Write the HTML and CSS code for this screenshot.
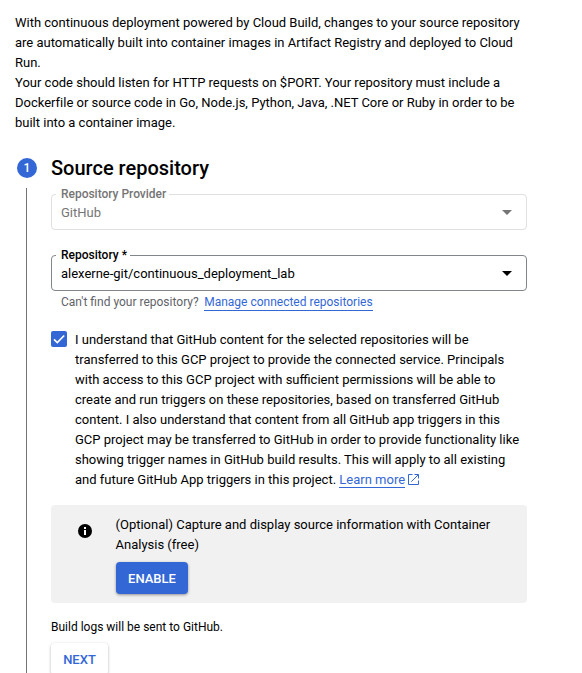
FILE: index.html
```
<!DOCTYPE html>
<html lang="en">
<head>
<meta charset="utf-8">
<title>Set up with Cloud Build</title>
<link rel="stylesheet" href="styles.css">
</head>
<body>
<main class="page">
  <section class="intro">
    <p>With continuous deployment powered by Cloud Build, changes to your source repository<br>are automatically built into container images in Artifact Registry and deployed to Cloud<br>Run.</p>
    <p>Your code should listen for HTTP requests on $PORT. Your repository must include a<br>Dockerfile or source code in Go, Node.js, Python, Java, .NET Core or Ruby in order to be<br>built into a container image.</p>
  </section>
  <section class="step">
    <div class="rail">
      <span class="number">1</span>
      <span class="line"></span>
    </div>
    <div class="content">
      <h2>Source repository</h2>
      <div class="field disabled">
        <span class="label">Repository Provider</span>
        <span class="value">GitHub</span>
        <svg class="arrow" width="10" height="5" viewBox="0 0 10 5"><path d="M0 0h10L5 5z"/></svg>
      </div>
      <div class="field active">
        <span class="label">Repository *</span>
        <span class="value">alexerne-git/continuous_deployment_lab</span>
        <svg class="arrow" width="10" height="5" viewBox="0 0 10 5"><path d="M0 0h10L5 5z"/></svg>
      </div>
      <p class="hint"><span>Can't find your repository?</span><a class="link">Manage connected repositories</a></p>
      <div class="consent">
        <span class="checkbox"><svg width="16" height="16" viewBox="0 0 16 16"><path d="M3 8.4l3.3 3.2L13.2 4.5" fill="none" stroke="#fff" stroke-width="1.7"/></svg></span>
        <p>I understand that GitHub content for the selected repositories will be<br>transferred to this GCP project to provide the connected service. Principals<br>with access to this GCP project with sufficient permissions will be able to<br>create and run triggers on these repositories, based on transferred GitHub<br>content. I also understand that content from all GitHub app triggers in this<br>GCP project may be transferred to GitHub in order to provide functionality like<br>showing trigger names in GitHub build results. This will apply to all existing<br>and future GitHub App triggers in this project. <a class="link">Learn more</a><svg class="external" width="11" height="11" viewBox="0 0 11 11" fill="none" stroke="#3367d6" stroke-width="1"><path d="M4.5.5h-4v10h10v-4M6.5.5h4v4M10.3.7L3.3 7.7"/></svg></p>
      </div>
      <div class="panel">
        <svg class="info" width="14" height="14" viewBox="0 0 14 14"><circle cx="7" cy="7" r="7"/><path d="M6 3h2v2H6zM6 6h2v5H6z" fill="#fff"/></svg>
        <div>
          <p>(Optional) Capture and display source information with Container<br>Analysis (free)</p>
          <button class="button primary">ENABLE</button>
        </div>
      </div>
      <p class="logs">Build logs will be sent to GitHub.</p>
      <button class="button plain">NEXT</button>
    </div>
  </section>
</main>
</body>
</html>
```
FILE: styles.css
```
* { box-sizing: border-box; }
html, body { margin: 0; height: 100%; overflow: hidden; }
body {
  background: #fff;
  color: #000;
  font: 400 13px/20px Roboto, sans-serif;
}
p, h2 { margin: 0; font-weight: 400; white-space: nowrap; }
.page { padding: 13px 55px 0 15px; height: 673px; overflow: hidden; }
.intro { height: 120px; letter-spacing: -.005px; }
.step { display: flex; margin-top: 25px; height: 540px; }
.rail { flex: 0 0 36px; display: flex; flex-direction: column; }
.number {
  width: 20px; height: 20px; margin: 0 0 10px 2px;
  border-radius: 50%;
  background: #3367d6; color: #fff;
  font-size: 12px; font-weight: 500; text-align: center;
}
.line { width: 1px; flex: 1; margin-left: 11px; background: #757575; }
.content { flex: 0 0 476px; }
h2 { font-size: 20px; font-weight: 500; line-height: 24px; margin-top: -2px; }
.field {
  position: relative;
  display: flex; align-items: center; justify-content: space-between;
  height: 36px; padding: 1px 14px 0 9px;
  border: 1px solid #80868b; border-radius: 4px;
}
.field .arrow { margin-bottom: 1px; }
.disabled { margin-top: 14px; border-color: #e0e0e0; color: #757575; fill: #757575; }
.active { margin-top: 25px; }
.active .value { letter-spacing: -.01px; }
.label {
  position: absolute; left: 4px; top: -9px;
  padding: 0 3px 0 5px;
  background: #fff;
  font-size: 12px; line-height: 16px; font-weight: 500;
}
.disabled .label { letter-spacing: -.02px; }
.hint { display: flex; gap: 5.5px; margin-top: 3px; padding-left: 10px; font-size: 12px; line-height: 16px; color: #5f6368; }
.link { color: #3367d6; border-bottom: 1px solid #3367d6; }
.consent { display: flex; gap: 8px; margin-top: 19px; }
.checkbox { width: 16px; height: 16px; margin-top: 1px; background: #3367d6; border-radius: 2px; }
.checkbox svg { display: block; }
.external { margin-left: 2.6px; vertical-align: -1px; }
.panel {
  display: flex; gap: 24px;
  height: 98px; margin-top: 15px; padding: 10px 0 0 27px;
  border-radius: 4px; background: #f1f1f1;
}
.info { margin-top: 9px; }
.panel p { margin-left: -.5px; }
.button {
  display: block; height: 32px; padding: 0; border: 0; border-radius: 4px;
  font: 500 13px/34px Roboto, sans-serif;
}
.primary { width: 72px; margin-top: 7px; background: #3367d6; color: #fff; box-shadow: 0 1px 3px rgba(0,0,0,.4); }
.logs { margin-top: 14px; font-size: 12px; }
.plain { width: 57px; margin-top: 6px; background: #fff; color: #3367d6; box-shadow: 0 1px 3px rgba(0,0,0,.3); }
```
